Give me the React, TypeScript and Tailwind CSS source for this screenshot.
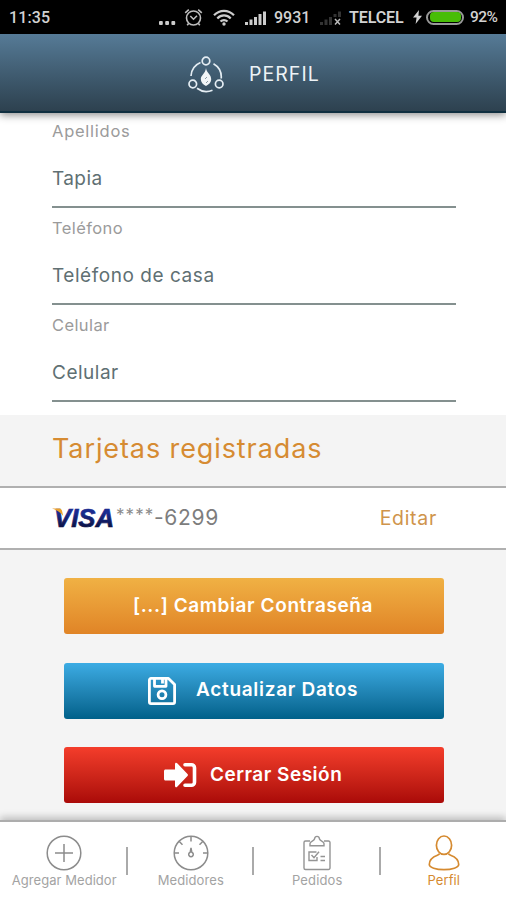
import type { ReactNode } from "react";
import { clsx } from "clsx";

const fields = [
  { label: "Apellidos", value: "Tapia", labelClass: "tracking-[0.75px]", valueClass: "tracking-[0.4px]" },
  { label: "Teléfono", value: "Teléfono de casa", labelClass: "tracking-[0.4px]", valueClass: "tracking-[0.55px]" },
  { label: "Celular", value: "Celular", labelClass: "tracking-[0.4px]", valueClass: "tracking-[0.5px]" },
];

function Signal({ weak = false }: { weak?: boolean }) {
  return (
    <svg width="22" height="16" viewBox="0 0 22 16" fill={weak ? "#333" : "#ccc"}>
      <rect x="0" y="12" width="3" height="3" />
      <rect x="4.5" y="9.5" width="3" height="5.5" />
      <rect x="9" y="7" width="3" height="8" />
      <rect x="13.5" y="4" width="3" height="11" />
      <rect x="18" y="1.5" width="3" height="13.5" />
      {weak && (
        <>
          <rect x="13" y="7" width="9" height="9" fill="#000" />
          <path d="M15 9l5 5.5M20 9l-5 5.5" stroke="#bbb" strokeWidth="1.5" />
        </>
      )}
    </svg>
  );
}

function StatusBar() {
  return (
    <div className="flex h-[34px] shrink-0 items-center bg-black pt-[2px] pl-[9px] font-[Roboto,sans-serif] text-[16px] font-medium text-[#d2d2d2]">
      <span className="w-[150px] tracking-[0.1px]">11:35</span>
      <svg width="18" height="16" viewBox="0 0 18 16" fill="#ccc">
        <rect x="0" y="11" width="3.8" height="4" rx="1" />
        <rect x="6.2" y="11" width="3.8" height="4" rx="1" />
        <rect x="12.4" y="11" width="3.8" height="4" rx="1" />
      </svg>
      <svg className="-mt-[2px] ml-[7px]" width="19" height="19" viewBox="0 0 19 19" fill="none" stroke="#bdbdbd" strokeWidth="1.6">
        <circle cx="9.5" cy="10" r="7" />
        <path d="M1.2 4.8l3.6-3.2M17.8 4.8l-3.6-3.2M6.3 8l3.2 3.2L13 7.8M4.6 15.5l-1.4 1.8M14.4 15.5l1.4 1.8" />
      </svg>
      <svg className="-mt-[2px] ml-[10px]" width="22" height="17" viewBox="0 0 22 17" fill="none" stroke="#ccc" strokeWidth="2.2">
        <path d="M1 6.2C6.8.3 15.2.3 21 6.2" />
        <path d="M4.3 9.4c3.9-4 9.5-4 13.4 0" />
        <path d="M7.5 12.6c2-2.1 5-2.1 7 0" />
        <circle cx="11" cy="15" r="1.7" fill="#ccc" stroke="none" />
      </svg>
      <span className="ml-[10px]">
        <Signal />
      </span>
      <span className="ml-[7px] w-[46px]">9931</span>
      <Signal weak />
      <span className="ml-[7px] w-[64px] text-[16px] font-semibold tracking-[-0.1px]">TELCEL</span>
      <svg className="-mt-[2px]" width="9" height="14" viewBox="0 0 9 14" fill="#d2d2d2">
        <path d="M6 0L0 7.6h3.6L2.6 14 9 5.8H5.4z" />
      </svg>
      <span className="-mt-[2px] ml-[4px] flex h-[15px] w-[38px] items-center justify-center rounded-full border-2 border-[#999]">
        <span className="h-[10px] w-[31px] rounded-[4px] bg-[#48bd06]" />
      </span>
      <span className="ml-[6px] text-[15.5px] tracking-[-0.5px]">92%</span>
    </div>
  );
}

function Header() {
  return (
    <header className="relative z-10 flex h-[79px] shrink-0 items-center border-b-2 border-[#102f40] bg-gradient-to-b from-[#567b97] to-[#2d414f] pt-[4px] pl-[188px] shadow-[0_2px_8px_rgba(0,0,0,0.45)]">
      <svg width="36" height="38" viewBox="0 0 36 38" fill="none" stroke="#e4edf3" strokeWidth="1.7">
        <circle cx="18" cy="5" r="3.8" />
        <circle cx="4.8" cy="28" r="3.8" />
        <circle cx="31.2" cy="28" r="3.8" />
        <path d="M12.5 6.5A15.6 15.6 0 0 0 3 20M25.5 7.7A15.6 15.6 0 0 1 33.2 22.5M9 32.3A15.6 15.6 0 0 0 24.5 34.2" />
        <path d="M18 12c.5 5 5.5 6.3 5.2 11.8-.2 2.6-2.5 5-5.2 6.2-3-1.4-5.2-3.8-5.2-7 0-3.8 4.5-5 5.2-11z" fill="#f1f5f7" stroke="none" />
        <path d="M19 21l-2 2M20 25l-2 2" stroke="#8a9aa4" strokeWidth="1" />
      </svg>
      <h1 className="ml-[25px] text-[19.5px] tracking-[1.05px] text-[#edf3f6]">PERFIL</h1>
    </header>
  );
}

function VisaLogo() {
  return (
    <svg className="overflow-visible" width="64" height="22" viewBox="0 0 64 22">
      <defs>
        <linearGradient id="visa" x1="0" y1="0" x2="0" y2="1">
          <stop offset="0.3" stopColor="#1a2c90" />
          <stop offset="1" stopColor="#070a2c" />
        </linearGradient>
      </defs>
      <text
        x="2"
        y="20"
        textLength="60"
        lengthAdjust="spacingAndGlyphs"
        fontFamily="Liberation Sans, sans-serif"
        fontSize="25.5"
        fontWeight="700"
        fontStyle="italic"
        fill="url(#visa)"
        stroke="url(#visa)"
        strokeWidth="0.7"
      >
        VISA
      </text>
      <path d="M0 1.5h6.500c2 0 3 .7 3.500 2.200L11.200 9C8.500 5.500 5 3 0 1.500z" fill="#e9a02c" />
    </svg>
  );
}

function Button({ className, children }: { className: string; children: ReactNode }) {
  return (
    <button
      className={clsx(
        "flex h-[56px] w-full items-center rounded-[3px] bg-gradient-to-b text-[19px] font-semibold text-white",
        className,
      )}
    >
      {children}
    </button>
  );
}

function NavItem({ label, icon, active, className }: { label: string; icon: ReactNode; active?: boolean; className?: string }) {
  return (
    <div
      className={clsx(
        "flex flex-1 flex-col items-center whitespace-nowrap pt-[13px] pl-[2px] text-[13px] leading-[16px]",
        active ? "text-[#d58a30]" : "text-[#a3a3a3]",
      )}
    >
      {icon}
      <span className={clsx("mt-[1px]", className)}>{label}</span>
    </div>
  );
}

function Divider() {
  return <div className="-mx-px mt-[25px] h-[28px] w-[2px] bg-[#aaa]" />;
}

function BottomNav() {
  return (
    <nav className="relative z-10 flex h-[80px] shrink-0 border-t-2 border-[#adadad] bg-white shadow-[0_-3px_7px_rgba(0,0,0,0.22)]">
      <NavItem
        label="Agregar Medidor"
        className="tracking-[0.05px]"
        icon={
          <svg width="36" height="36" viewBox="0 0 36 36" fill="none" stroke="#8c8c8c" strokeWidth="1.5">
            <circle cx="18" cy="18" r="16.8" />
            <path d="M18 9v18M9 18h18" />
          </svg>
        }
      />
      <Divider />
      <NavItem
        label="Medidores"
        className="tracking-[0.1px]"
        icon={
          <svg width="36" height="36" viewBox="0 0 36 36" fill="none" stroke="#8c8c8c" strokeWidth="1.5">
            <circle cx="18" cy="18" r="16.8" />
            <path d="M18 1.5v5M6.3 6.5l3.2 3.2M29.7 6.5l-3.2 3.2M1.5 18H6M30 18h4.5" />
            <path d="M18 13l.8 4.2a2.300 2.300 0 1 1-1.600 0z" />
          </svg>
        }
      />
      <Divider />
      <NavItem
        label="Pedidos"
        className="tracking-[0.15px]"
        icon={
          <svg width="36" height="36" viewBox="0 0 36 36" fill="none" stroke="#949494" strokeWidth="1.4">
            <path d="M11 6H6.500a1.500 1.500 0 0 0-1.500 1.500v25.500a1.500 1.500 0 0 0 1.500 1.500h23a1.500 1.500 0 0 0 1.500-1.500V7.500A1.500 1.500 0 0 0 29.500 6H25" />
            <path d="M11 10.700V8.500c0-2.500 4-2.300 4.500-4.500.5-3.500 4.500-3.500 5 0 .5 2.200 4.500 2 4.500 4.500v2.200z" />
            <path d="M17.500 17H10v8.500h8V22M12.500 20l2.500 2.700 5-6M21.500 21.500H26M21.500 25.500H26" />
          </svg>
        }
      />
      <Divider />
      <NavItem
        active
        label="Perfil"
        className="tracking-[0.1px]"
        icon={
          <svg width="36" height="36" viewBox="0 0 36 36" fill="none" stroke="#d58a30" strokeWidth="1.7" strokeLinejoin="round">
            <ellipse cx="18" cy="10.2" rx="7.6" ry="9.2" />
            <path d="M13.600 18.500c-.3 1-1 1.300-2.200 1.700C6.500 22 3.300 25 3.300 29.500c0 3 6.700 5.200 14.700 5.200s14.700-2.200 14.700-5.200c0-4.500-3.200-7.500-8.100-9.300-1.200-.4-1.900-.7-2.200-1.700" />
          </svg>
        }
      />
    </nav>
  );
}

export default function App() {
  return (
    <div className="flex h-[900px] w-[506px] flex-col overflow-hidden bg-[#f4f4f4] font-[Inter,sans-serif]">
      <StatusBar />
      <Header />
      <main className="flex-1 overflow-hidden">
        <div className="-mt-[2px] h-[304px] bg-white pr-[50px] pl-[52px]">
          {fields.map(({ label, value, labelClass, valueClass }) => (
            <div key={label} className="h-[97px] border-b-2 border-[#84908f] pt-[10px]">
              <div className={clsx("text-[16.5px] leading-[20px] text-[#9b9b9b]", labelClass)}>{label}</div>
              <div className={clsx("mt-[26px] text-[19px] leading-[24px] text-[#607073]", valueClass)}>{value}</div>
            </div>
          ))}
        </div>
        <h2 className="flex h-[71px] items-center pb-[2px] pl-[52px] text-[27px] tracking-[0.9px] text-[#d68b32]">
          Tarjetas registradas
        </h2>
        <div className="flex h-[64px] items-center border-y-2 border-[#b0b0b0] bg-white pr-[69px] pl-[52px]">
          <VisaLogo />
          <span className="-mt-[4px] w-[38px] text-[17px] tracking-[1.1px] text-[#8a8a8a]">****</span>
          <span className="text-[21px] tracking-[0.7px] text-[#7d7d7d]">-6299</span>
          <span className="mt-[2px] ml-auto text-[19.5px] tracking-[0.7px] text-[#cf944b]">Editar</span>
        </div>
        <div className="flex flex-col gap-[28.5px] pt-[28px] pr-[62.5px] pl-[64px]">
          <Button className="from-[#f0b144] to-[#e08426] pl-[69px] tracking-[0.6px]">[...] Cambiar Contraseña</Button>
          <Button className="from-[#3cace4] to-[#00618a] pl-[84px] tracking-[0.7px]">
            <svg width="28" height="28" viewBox="0 0 28 28" fill="none" stroke="white" strokeWidth="2.8" strokeLinejoin="round">
              <path d="M3 1.4h17.5l6.100 6.100V25a1.600 1.600 0 0 1-1.600 1.600H3A1.600 1.600 0 0 1 1.400 25V3A1.600 1.600 0 0 1 3 1.400z" />
              <path d="M6.500 2v7.300h11.500V2M14.500 2v4.500" />
              <circle cx="14" cy="17.8" r="3.9" />
            </svg>
            <span className="ml-[20px]">Actualizar Datos</span>
          </Button>
          <Button className="from-[#f43d2b] to-[#aa0908] pl-[100px] tracking-[0.5px]">
            <svg width="33" height="26" viewBox="0 0 33 26" fill="white">
              <path d="M1.500 7.500H11V2.300c0-1.500 1.200-2 2.200-1L23.500 12c.6.600.6 1.400 0 2L13.200 24.700c-1 1-2.200.5-2.200-1v-5.200H1.500c-.8 0-1.500-.7-1.500-1.500V9c0-.8.700-1.500 1.500-1.500z" />
              <path d="M21 2.700h6.500c1.500 0 3 1.200 3 3v14.600c0 1.800-1.500 3-3 3H21" fill="none" stroke="white" strokeWidth="3.600" strokeLinecap="round" />
            </svg>
            <span className="ml-[13px]">Cerrar Sesión</span>
          </Button>
        </div>
      </main>
      <BottomNav />
    </div>
  );
}
